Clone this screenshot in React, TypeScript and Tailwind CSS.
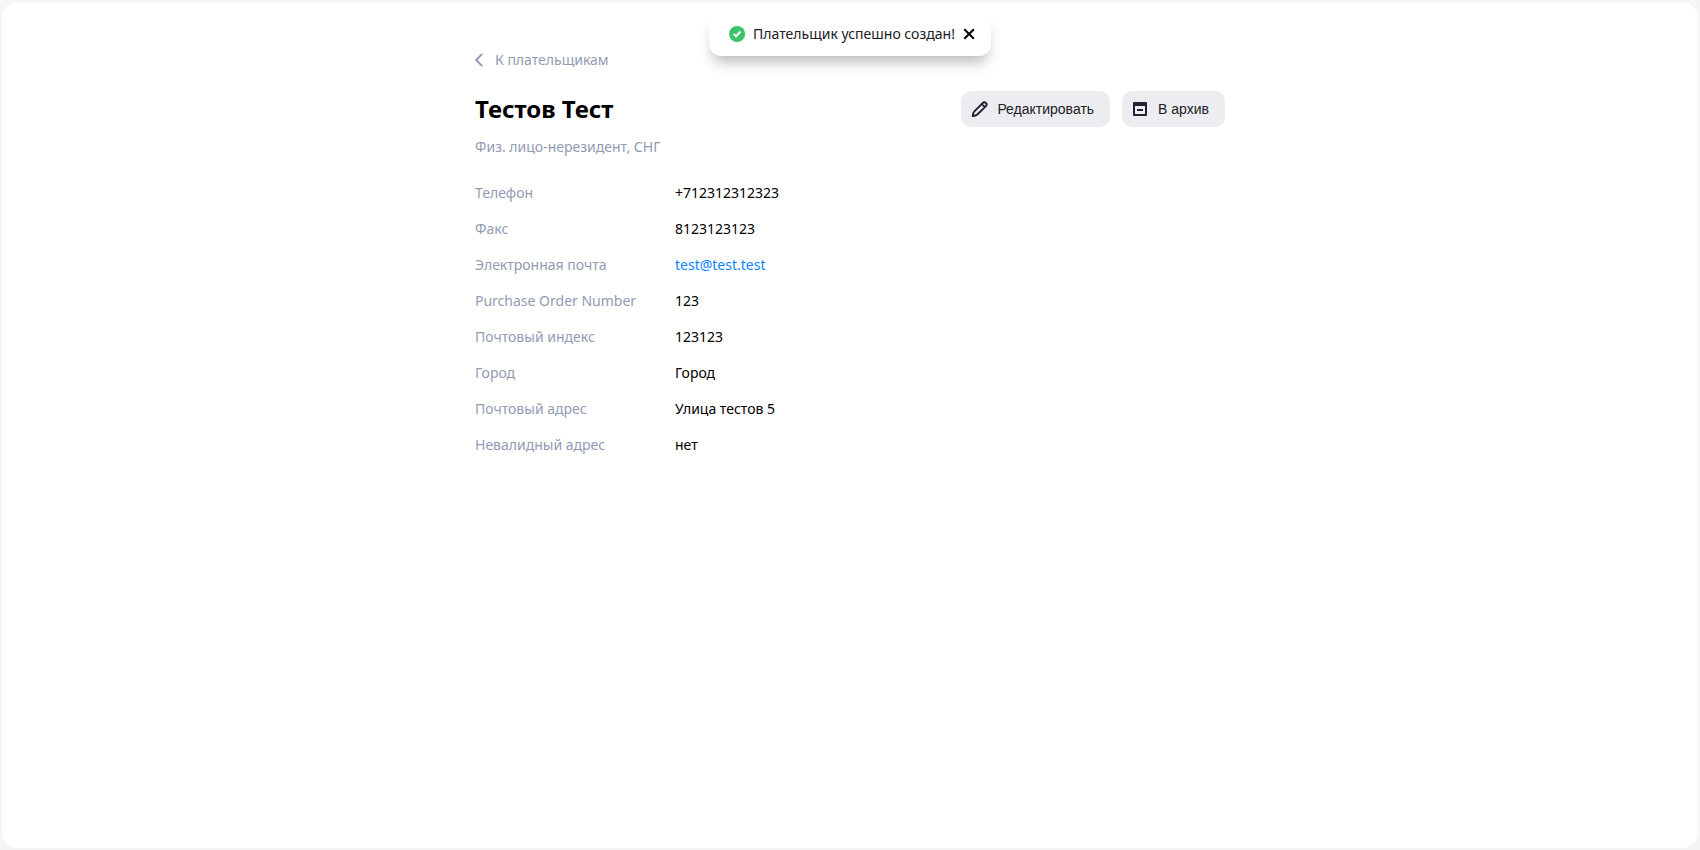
import React from 'react';

type Detail = { label: string; value: string; href?: string };

const details: Detail[] = [
  { label: 'Телефон', value: '+712312312323' },
  { label: 'Факс', value: '8123123123' },
  { label: 'Электронная почта', value: 'test@test.test', href: 'mailto:test@test.test' },
  { label: 'Purchase Order Number', value: '123' },
  { label: 'Почтовый индекс', value: '123123' },
  { label: 'Город', value: 'Город' },
  { label: 'Почтовый адрес', value: 'Улица тестов 5' },
  { label: 'Невалидный адрес', value: 'нет' },
];

function Toast() {
  return (
    <div
      role="status"
      className="absolute top-3 left-1/2 flex h-11 -translate-x-1/2 items-center gap-2 rounded-xl bg-white pr-4 pl-5 whitespace-nowrap text-[#21201f] shadow-[0_10px_14px_-4px_rgba(0,0,0,0.28)]"
    >
      <svg aria-hidden="true" viewBox="0 0 16 16" className="size-4">
        <circle cx="8" cy="8" r="8" fill="#3bc46b" />
        <path d="M4.7 8 7 10.2l4.4-4.6" fill="none" stroke="#fff" strokeWidth="2.2" />
      </svg>
      <span>Плательщик успешно создан!</span>
      <button type="button" aria-label="Закрыть" className="text-black">
        <svg aria-hidden="true" viewBox="0 0 12 12" className="size-3">
          <path d="m1.2 1.2 9.6 9.6m0-9.6-9.6 9.6" fill="none" stroke="currentColor" strokeWidth="2" />
        </svg>
      </button>
    </div>
  );
}

function ActionButton({ icon, children }: { icon: React.ReactNode; children: React.ReactNode }) {
  return (
    <button
      type="button"
      className="flex h-9 items-center gap-2 rounded-[10px] bg-[#ecedf0] pr-4 pl-2 font-['Liberation_Sans',sans-serif] text-[#21201f]"
    >
      {icon}
      {children}
    </button>
  );
}

export default function App() {
  return (
    <div className="min-h-screen bg-[#f5f5f6] p-0.5 font-['Noto_Sans',sans-serif] text-sm leading-5 text-black">
      <Toast />
      <main className="min-h-[calc(100vh-4px)] rounded-2xl bg-white px-4 pt-12">
        <div className="mx-auto max-w-[750px]">
          <a href="#payers" className="flex w-fit items-center gap-3 text-[#929bb3]">
            <svg aria-hidden="true" viewBox="0 0 8 14" className="h-3.5 w-2">
              <path d="M7.2.9 1.2 7l6 6.1" fill="none" stroke="currentColor" strokeWidth="2" />
            </svg>
            К плательщикам
          </a>
          <header className="mt-[21px] flex items-center justify-between">
            <h1 className="text-2xl font-bold">Тестов Тест</h1>
            <div className="flex gap-3">
              <ActionButton
                icon={
                  <svg aria-hidden="true" viewBox="0 0 20 20" className="size-5">
                    <path
                      d="M3.700 17.100c.1-2 .7-3.700 1.900-4.900L13.800 4a2.150 2.150 0 0 1 3.100 3.100L8.600 15.300c-1.200 1.100-2.900 1.700-4.900 1.800ZM13 5.200l2.700 2.700"
                      fill="none"
                      stroke="#222131"
                      strokeWidth="1.9"
                      strokeLinejoin="round"
                    />
                  </svg>
                }
              >
                Редактировать
              </ActionButton>
              <ActionButton
                icon={
                  <svg aria-hidden="true" viewBox="0 0 20 20" className="size-5">
                    <path
                      d="M4 3h12a1 1 0 0 1 1 1v12a1 1 0 0 1-1 1H4a1 1 0 0 1-1-1V4a1 1 0 0 1 1-1Zm1 4v8h10V7Zm2 3h6v2H7Z"
                      fill="#222131"
                      fillRule="evenodd"
                    />
                  </svg>
                }
              >
                В архив
              </ActionButton>
            </div>
          </header>
          <p className="mt-2.5 text-[#929bb3]">Физ. лицо-нерезидент, СНГ</p>
          <dl className="mt-[26px] grid grid-cols-[200px_1fr] gap-y-4">
            {details.map(({ label, value, href }) => (
              <React.Fragment key={label}>
                <dt className="text-[#929bb3]">{label}</dt>
                <dd>
                  {href ? (
                    <a href={href} className="text-[#0a84ff]">
                      {value}
                    </a>
                  ) : (
                    value
                  )}
                </dd>
              </React.Fragment>
            ))}
          </dl>
        </div>
      </main>
    </div>
  );
}
